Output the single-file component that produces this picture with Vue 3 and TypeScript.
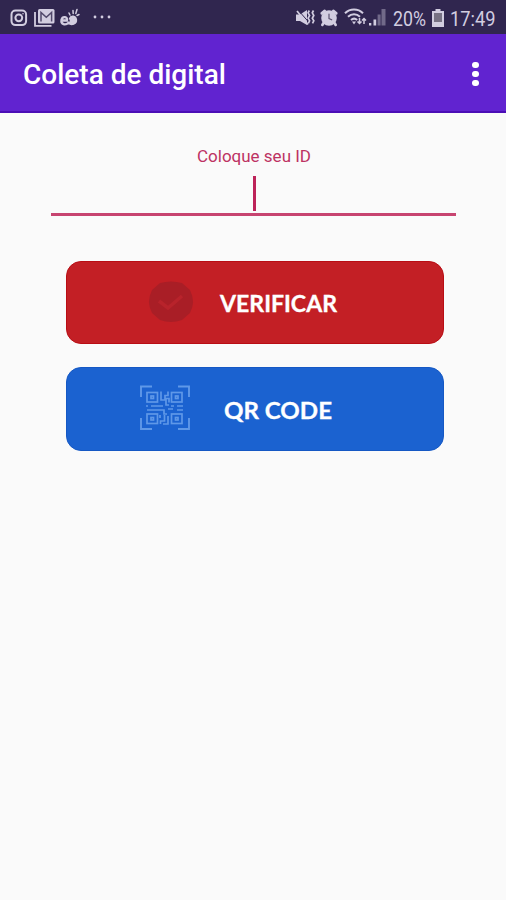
<script setup lang="ts">
import { ref } from 'vue'

const title = ref('Coleta de digital')
const userId = ref('')
</script>

<template>
  <main class="screen">
    <header class="status">
      <div class="notifications">
        <svg class="insta" width="18" height="18" viewBox="0 0 18 18" fill="none" stroke="currentColor" stroke-width="2">
          <rect x="1.5" y="1.5" width="14.6" height="14.6" rx="4" />
          <circle cx="8.8" cy="8.8" r="3.4" />
          <circle cx="13" cy="4.7" r=".8" fill="currentColor" stroke="none" />
        </svg>
        <svg class="mail" width="21" height="18" viewBox="0 0 21 18" fill="none">
          <path d="M1 3v13.800h16.500" stroke="currentColor" stroke-width="1.800" />
          <rect x="4" y="0" width="16.500" height="14.600" rx="1.500" fill="currentColor" />
          <path d="M7 12.500V3.500l5.300 4.800 5.300-4.800v9" stroke="#51486b" stroke-width="1.500" />
        </svg>
        <svg class="snail" width="20" height="20" viewBox="0 0 20 20" fill="none" stroke="currentColor" stroke-linecap="round">
          <path d="M1.500 12.500h5.500c1-4-4.500-4.500-5.500-.8-.8 5 4 6 7 3 3 2.500 8 1 7.500-3-.5-3.500-5-4-6-1" stroke-width="2.300" />
          <path d="M10 11l3-3 3 2v5l-3 1.500-4-1z" fill="currentColor" stroke="none" />
          <path d="M9 5l1 2M13 2.500l.2 3M17 1.500l-1.200 4M19 6.500l-2 1" stroke-width="1.500" />
        </svg>
        <svg class="more" width="18" height="4" viewBox="0 0 18 4" fill="currentColor">
          <circle cx="2" cy="2" r="1.400" /><circle cx="9" cy="2" r="1.400" /><circle cx="16" cy="2" r="1.400" />
        </svg>
      </div>
      <div class="system">
        <svg class="mute" width="19" height="18" viewBox="0 0 19 18" fill="none" stroke="currentColor">
          <path d="M0 5.500h4L11 1v15L4 12H0z" fill="currentColor" stroke="none" />
          <path d="M2.500 1.500l11 12.500" stroke="#30264f" stroke-width="1" />
          <path d="M1 2l11 13.500" stroke-width="1.700" />
          <path d="M13.300 1.500l-1.200 2.300 1.500 2.700-1.500 2.800 1.500 2.500-1.300 2.500M17.500 1.500l-1.200 2.300 1.500 2.700-1.500 2.800 1.500 2.500-1.300 2.500" stroke-width="1.700" />
        </svg>
        <svg class="alarm" width="18" height="18" viewBox="0 0 18 18" fill="none" stroke="currentColor" stroke-linecap="round">
          <circle cx="9" cy="9" r="7.800" fill="currentColor" stroke="none" />
          <path d="M1.700 4.300l3-2.500M13.300 1.800l3 2.500M3.500 14l-1.200 2M14.500 14l1.200 2" stroke-width="2.600" />
          <path d="M9 5v4.500l2.700 1.300" stroke="#5b526f" stroke-width="1.200" />
        </svg>
        <svg class="wifi" width="23" height="18" viewBox="0 0 23 18" fill="none" stroke="currentColor" stroke-width="2">
          <path d="M1 5.200c5-4.900 13-4.900 18 0M4 8.700c3.500-3.300 8.500-3.300 12 0M7 12c2-1.800 4.200-1.800 6.200 0" />
          <path d="M8 13.500h4l-2 3z" fill="currentColor" stroke="none" />
          <path d="M15.500 10v6M13.500 13.500l2 2 2-2M20 16v-5M18 12.500l2-2 2 2" stroke-width="1.500" />
        </svg>
        <svg class="signal" width="17" height="17" viewBox="0 0 17 17" fill="currentColor">
          <rect y="14" width="2.300" height="2.500" /><rect x="4.500" y="10.500" width="2.700" height="6" />
          <g opacity=".4"><rect x="8.600" y="5.500" width="3" height="11" /><rect x="12.500" y="0" width="4" height="16.500" /></g>
        </svg>
        <svg class="percent" width="34" height="26"><text x="0" y="19.500" textLength="33" lengthAdjust="spacingAndGlyphs">20%</text></svg>
        <svg class="battery" width="12" height="18" viewBox="0 0 12 18">
          <path d="M3.500 0h5v2H12v16H0V2h3.500z" fill="currentColor" />
          <rect x="2" y="4" width="8" height="9" fill="#777184" />
        </svg>
        <svg class="clock" width="47" height="26"><text x="0" y="19.500" textLength="45.500" lengthAdjust="spacingAndGlyphs">17:49</text></svg>
      </div>
    </header>

    <nav class="appbar">
      <h1>{{ title }}</h1>
      <button class="menu" type="button"><i /><i /><i /></button>
    </nav>

    <section class="form">
      <label for="user-id">Coloque seu ID</label>
      <div class="field">
        <input id="user-id" v-model="userId" autocomplete="off" />
        <span class="caret" />
      </div>

      <button class="action verify" type="button">
        <svg class="check" width="46" height="42" viewBox="0 0 46 42">
          <path d="M12 2Q23-1 34 2L42 9Q48 21 42 32L34 39Q23 43 12 39L4 32Q-2 21 4 9Z" fill="#a91e26" />
          <path d="M11 20l9 7L34 15" fill="none" stroke="#b8232b" stroke-width="3.500" />
        </svg>
        <svg class="label" width="118" height="28"><text x="0" y="20.500" textLength="117" lengthAdjust="spacingAndGlyphs">VERIFICAR</text></svg>
      </button>

      <button class="action qr" type="button">
        <svg class="code" width="50" height="46" viewBox="0 0 50 46" fill="none" stroke="#5f98e8">
          <path d="M1 12V1.500h11M38 1.500h11V12M49 33v11H38M12 44H1V33" stroke-width="1.900" />
          <g stroke-width="1.700">
            <rect x="7" y="7.500" width="10.500" height="9.500" /><rect x="31.500" y="7.500" width="10.500" height="9.500" />
            <rect x="7" y="29" width="10.500" height="9.500" /><rect x="31.500" y="29" width="10.500" height="9.500" />
            <rect x="11" y="11" width="2.500" height="2.500" /><rect x="35.500" y="11" width="2.500" height="2.500" />
            <rect x="11" y="32.500" width="2.500" height="2.500" /><rect x="35.500" y="32.500" width="2.500" height="2.500" />
            <path d="M21 6.500V15h5v5h3M28 6.500v4h-3v3h4v4M6 21h2M11 21h12M31 21h3M37 21h6M7 25h17v4h3M28 24h5M37 25h6M20.500 39v-3h4v-6M28 31v8h-5M20 30v3" />
          </g>
        </svg>
        <svg class="label" width="110" height="28"><text x="0" y="20.500" textLength="108" lengthAdjust="spacingAndGlyphs">QR CODE</text></svg>
      </button>
    </section>
  </main>
</template>

<style>
body { margin: 0; background: #fafafa; }
</style>

<style scoped>
.screen { width: 506px; height: 900px; background: #fafafa; font-family: Roboto, sans-serif; overflow: hidden; }
.status { height: 34px; box-sizing: border-box; display: flex; justify-content: space-between; background: #30264f; color: #d2cde0; padding: 0 9px 0 10px; }
.notifications, .system { display: flex; align-items: flex-start; }
svg { display: block; flex: none; overflow: visible; }
.insta { margin-top: 9px; }
.mail { margin: 9px 0 0 6px; }
.snail { margin: 8px 0 0 5px; }
.more { margin: 15px 0 0 13px; }
.mute { margin-top: 9px; }
.alarm { margin: 9px 0 0 5px; }
.wifi { margin: 8px 0 0 6px; }
.signal { margin: 9px 0 0 2px; }
.percent { margin: 6px 0 0 7px; }
.battery { margin: 9px 0 0 5px; }
.clock { margin: 6px 0 0 6px; }
.status text { font-size: 21px; fill: currentColor; }
.appbar { height: 79px; box-sizing: border-box; padding: 0 23px; display: flex; align-items: center; justify-content: space-between; background: #6123d0; border-bottom: 2px solid #4b0eb6; }
h1 { margin: 5px 0 0; color: #fff; font-size: 28px; font-weight: 500; line-height: 36px; white-space: nowrap; }
button { border: 0; padding: 0; }
.menu { display: flex; flex-direction: column; gap: 2.500px; background: none; width: 15px; align-items: center; margin-top: 3px; }
.menu i { width: 6.500px; height: 6.500px; border-radius: 50%; background: #fff; }
.form { display: flex; flex-direction: column; align-items: center; padding: 31px 0 0 2px; }
label { color: #bd3263; font-size: 17px; line-height: 24px; height: 24px; white-space: nowrap; }
.field { position: relative; width: 405px; height: 45px; margin-right: 2px; border-bottom: 3px solid #c74470; }
input { width: 100%; height: 100%; border: 0; padding: 0; outline: 0; background: transparent; }
.caret { position: absolute; left: 202.5px; top: 8px; width: 3px; height: 35px; background: #bd2359; }
.action { width: 378px; height: 83px; box-sizing: border-box; border-radius: 15px; display: flex; align-items: flex-start; margin-left: 2px; }
.verify { margin-top: 45px; background: #c31f25; border: 1px solid #b90d14; }
.qr { margin-top: 23px; height: 84px; background: #1b62d0; border: 1px solid #1558c4; }
.check { margin: 19px 0 0 81px; }
.code { margin: 17px 0 0 73px; }
.label text { font-family: Lato, sans-serif; font-size: 22px; font-weight: 700; fill: #fff; stroke: #fff; stroke-width: .3px; }
.verify .label { margin: 29px 0 0 26px; }
.qr .label { margin: 30px 0 0 34px; }
</style>
